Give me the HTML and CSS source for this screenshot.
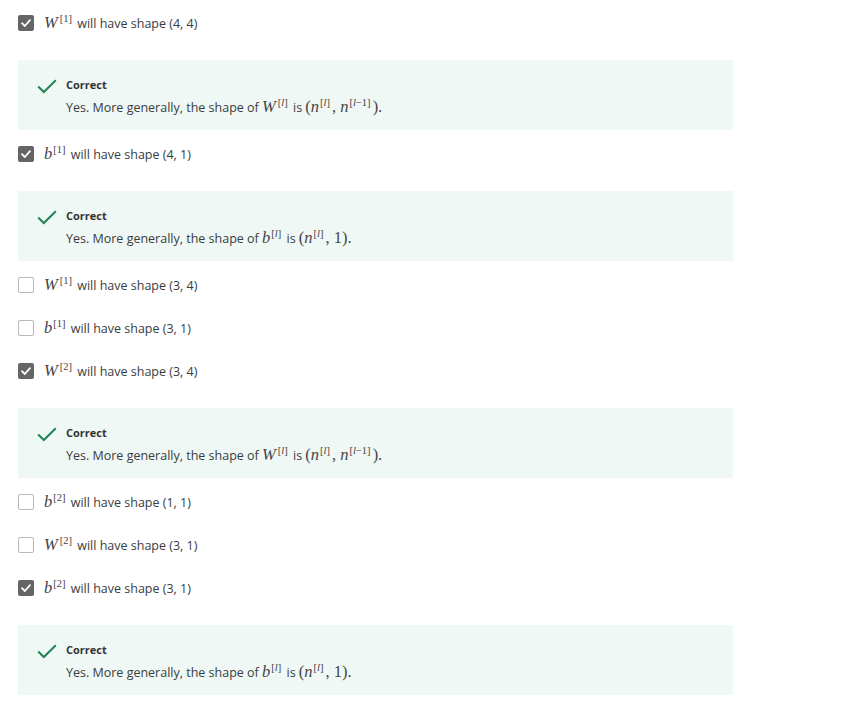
FILE: index.html
```html
<!DOCTYPE html>
<html>
<head>
<meta charset="utf-8">
<link rel="stylesheet" href="styles.css">
</head>
<body>
<div class="quiz">
  <div class="option first">
    <span class="box checked"><svg viewBox="0 0 16 16" width="16" height="16"><polyline points="4,8.2 6.8,11 12,5.2" fill="none" stroke="#fff" stroke-width="1.8" stroke-linecap="round" stroke-linejoin="round"/></svg></span>
    <span class="label"><span class="m"><i class="W">W</i><sup>[1]</sup></span> will have shape (4, 4)</span>
  </div>
  <div class="feedback">
    <svg class="tick" viewBox="0 0 20 15" width="20" height="15"><polyline points="1.2,7.5 6.8,13 18.8,1.2" fill="none" stroke="#1f8354" stroke-width="2"/></svg>
    <div class="fb-body">
      <div class="fb-title">Correct</div>
      <div class="fb-text">Yes. More generally, the shape of <span class="m"><i class="W">W</i><sup>[<i>l</i>]</sup></span> is <span class="m">(<i>n</i><sup>[<i>l</i>]</sup>, <i>n</i><sup>[<i>l</i>−1]</sup>).</span></div>
    </div>
  </div>

  <div class="option after-fb">
    <span class="box checked"><svg viewBox="0 0 16 16" width="16" height="16"><polyline points="4,8.2 6.8,11 12,5.2" fill="none" stroke="#fff" stroke-width="1.8" stroke-linecap="round" stroke-linejoin="round"/></svg></span>
    <span class="label"><span class="m"><i>b</i><sup>[1]</sup></span> will have shape (4, 1)</span>
  </div>
  <div class="feedback">
    <svg class="tick" viewBox="0 0 20 15" width="20" height="15"><polyline points="1.2,7.5 6.8,13 18.8,1.2" fill="none" stroke="#1f8354" stroke-width="2"/></svg>
    <div class="fb-body">
      <div class="fb-title">Correct</div>
      <div class="fb-text">Yes. More generally, the shape of <span class="m"><i>b</i><sup>[<i>l</i>]</sup></span> is <span class="m">(<i>n</i><sup>[<i>l</i>]</sup>, 1).</span></div>
    </div>
  </div>

  <div class="option after-fb">
    <span class="box"></span>
    <span class="label"><span class="m"><i class="W">W</i><sup>[1]</sup></span> will have shape (3, 4)</span>
  </div>
  <div class="option">
    <span class="box"></span>
    <span class="label"><span class="m"><i>b</i><sup>[1]</sup></span> will have shape (3, 1)</span>
  </div>
  <div class="option">
    <span class="box checked"><svg viewBox="0 0 16 16" width="16" height="16"><polyline points="4,8.2 6.8,11 12,5.2" fill="none" stroke="#fff" stroke-width="1.8" stroke-linecap="round" stroke-linejoin="round"/></svg></span>
    <span class="label"><span class="m"><i class="W">W</i><sup>[2]</sup></span> will have shape (3, 4)</span>
  </div>
  <div class="feedback">
    <svg class="tick" viewBox="0 0 20 15" width="20" height="15"><polyline points="1.2,7.5 6.8,13 18.8,1.2" fill="none" stroke="#1f8354" stroke-width="2"/></svg>
    <div class="fb-body">
      <div class="fb-title">Correct</div>
      <div class="fb-text">Yes. More generally, the shape of <span class="m"><i class="W">W</i><sup>[<i>l</i>]</sup></span> is <span class="m">(<i>n</i><sup>[<i>l</i>]</sup>, <i>n</i><sup>[<i>l</i>−1]</sup>).</span></div>
    </div>
  </div>

  <div class="option after-fb">
    <span class="box"></span>
    <span class="label"><span class="m"><i>b</i><sup>[2]</sup></span> will have shape (1, 1)</span>
  </div>
  <div class="option">
    <span class="box"></span>
    <span class="label"><span class="m"><i class="W">W</i><sup>[2]</sup></span> will have shape (3, 1)</span>
  </div>
  <div class="option">
    <span class="box checked"><svg viewBox="0 0 16 16" width="16" height="16"><polyline points="4,8.2 6.8,11 12,5.2" fill="none" stroke="#fff" stroke-width="1.8" stroke-linecap="round" stroke-linejoin="round"/></svg></span>
    <span class="label"><span class="m"><i>b</i><sup>[2]</sup></span> will have shape (3, 1)</span>
  </div>
  <div class="feedback">
    <svg class="tick" viewBox="0 0 20 15" width="20" height="15"><polyline points="1.2,7.5 6.8,13 18.8,1.2" fill="none" stroke="#1f8354" stroke-width="2"/></svg>
    <div class="fb-body">
      <div class="fb-title">Correct</div>
      <div class="fb-text">Yes. More generally, the shape of <span class="m"><i>b</i><sup>[<i>l</i>]</sup></span> is <span class="m">(<i>n</i><sup>[<i>l</i>]</sup>, 1).</span></div>
    </div>
  </div>
</div>
</body>
</html>
```

FILE: styles.css
```css
html, body {
  margin: 0;
  padding: 0;
  background: #fff;
}
body {
  font-family: "Open Sans", "Liberation Sans", sans-serif;
  font-size: 12.5px;
  color: #3a3c3e;
}
.quiz {
  width: 715px;
  padding-left: 18px;
  padding-top: 13px;
}
.option {
  display: flex;
  align-items: center;
  height: 20px;
  margin-top: 23px;
}
.option.first {
  margin-top: 0;
}
.option.after-fb {
  margin-top: 14px;
}
.box {
  width: 16px;
  height: 16px;
  box-sizing: border-box;
  border: 1.5px solid #b8b8b8;
  border-radius: 2px;
  background: #fff;
  flex: none;
  display: flex;
}
.box.checked {
  border: none;
  background: #636567;
}
.label {
  margin-left: 10px;
  white-space: nowrap;
}
.m {
  font-family: "Liberation Serif", "DejaVu Serif", serif;
  font-size: 16.5px;
  color: #444;
}
.m i {
  font-style: italic;
}
.m .W {
  margin-right: 1px;
}
.m sup {
  font-size: 10.5px;
  vertical-align: 0;
  position: relative;
  top: -6px;
  margin-left: 1px;
  margin-right: 2px;
}
.m sup i {
  font-style: italic;
}
.feedback {
  margin-top: 27px;
  height: 70px;
  box-sizing: border-box;
  background: #eff8f5;
  display: flex;
  padding: 17px 0 0 19px;
}
.tick {
  flex: none;
  margin-top: 2px;
}
.fb-body {
  margin-left: 9px;
}
.fb-title {
  font-size: 11px;
  font-weight: 700;
  line-height: 16px;
  color: #333;
}
.fb-text {
  margin-top: 3px;
  line-height: 22px;
  white-space: nowrap;
}
```
